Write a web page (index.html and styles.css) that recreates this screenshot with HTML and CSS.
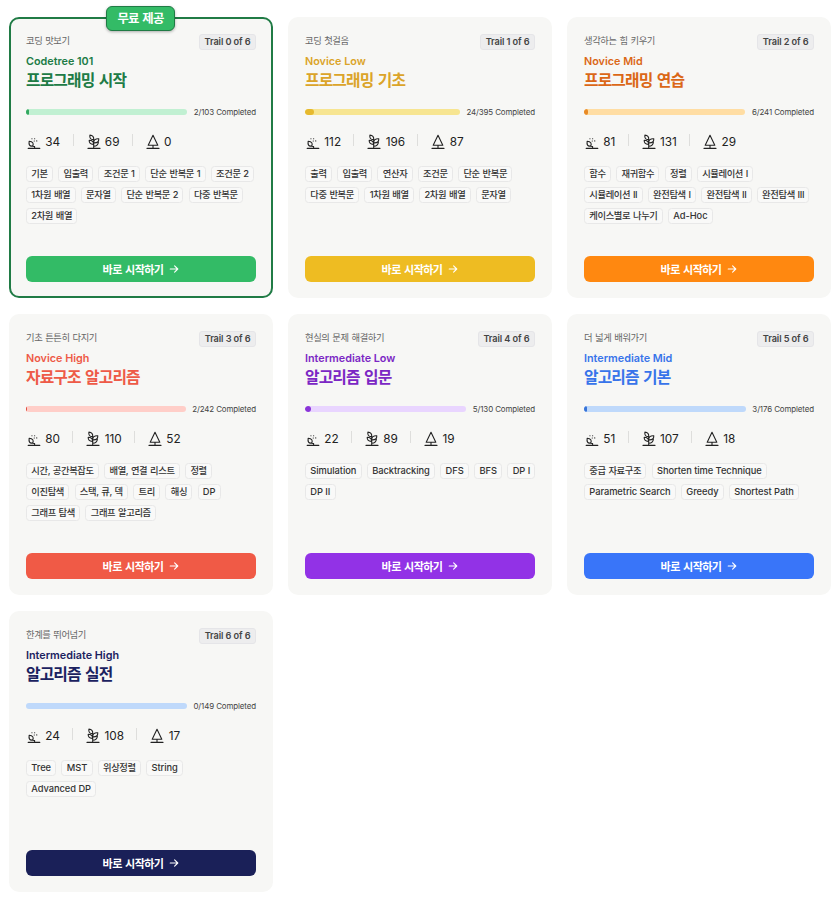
FILE: index.html
```html
<!DOCTYPE html>
<html lang="ko">
<head>
    <title>Codetree Trails</title>
    <meta charset="UTF-8">
    <link rel="stylesheet" href="styles.css">
</head>
<body>

    <svg class="sprite" width="0" height="0">
        <symbol id="seed" viewBox="0 0 16 16">
            <path d="M2.2 14.4H13.8M8.6 14.2V12.6M6.6 12C3.6 12.6 2.6 10.6 3.2 7.2C6.6 7.6 8.2 9.4 6.6 12ZM6.6 12L8.6 12.8"/>
            <path class="dots" d="M5.9 4.7H6M8.6 4.7H8.7M8.2 7H8.3M10.7 6.9H10.8"/>
        </symbol>
        <symbol id="sprout" viewBox="0 0 16 16">
            <path d="M2 14.4H14M7.7 14.2V5M7.7 5.6C4.6 5.8 3.4 4 3.9 1.1C6.6 1.2 8 2.8 7.7 5.6ZM7.7 10.4C4.6 10.6 3 9 3.2 6.3C6 6.3 7.7 7.7 7.7 10.4ZM7.7 8.8C7.7 6 9.4 4.5 12.8 4.8C13 7.8 11.2 9.1 7.7 8.8M7.7 12.2C10.6 12.2 12.2 10.8 12.4 8"/>
        </symbol>
        <symbol id="tree" viewBox="0 0 16 16">
            <path d="M2 14.4H14M8 14.2V11.5M8 1.2L12.8 11.3H3.2Z"/>
        </symbol>
        <symbol id="arrow" viewBox="0 0 10 10">
            <path d="M1.2 5H8.8M5.6 1.8L8.8 5L5.6 8.2"/>
        </symbol>
    </svg>

    <main class="trails">

        <section class="card green free">
            <div class="badge">무료 제공</div>
            <header>
                <div>
                    <p class="sub">코딩 맛보기</p>
                    <h3>Codetree 101</h3>
                    <h2>프로그래밍 시작</h2>
                </div>
                <span class="trail">Trail 0 of 6</span>
            </header>
            <div class="progress"><div class="bar"><div class="fill" style="width: 1.9%"></div></div><span>2/103 Completed</span></div>
            <div class="stats">
                <span><svg><use href="#seed"/></svg>34</span>
                <span><svg><use href="#sprout"/></svg>69</span>
                <span><svg><use href="#tree"/></svg>0</span>
            </div>
            <ul class="tags">
                <li>기본</li><li>입출력</li><li>조건문 1</li><li>단순 반복문 1</li><li>조건문 2</li>
                <li>1차원 배열</li><li>문자열</li><li>단순 반복문 2</li><li>다중 반복문</li><li>2차원 배열</li>
            </ul>
            <button>바로 시작하기<svg><use href="#arrow"/></svg></button>
        </section>

        <section class="card yellow">
            <header>
                <div>
                    <p class="sub">코딩 첫걸음</p>
                    <h3>Novice Low</h3>
                    <h2>프로그래밍 기초</h2>
                </div>
                <span class="trail">Trail 1 of 6</span>
            </header>
            <div class="progress"><div class="bar"><div class="fill" style="width: 6.1%"></div></div><span>24/395 Completed</span></div>
            <div class="stats">
                <span><svg><use href="#seed"/></svg>112</span>
                <span><svg><use href="#sprout"/></svg>196</span>
                <span><svg><use href="#tree"/></svg>87</span>
            </div>
            <ul class="tags">
                <li>출력</li><li>입출력</li><li>연산자</li><li>조건문</li><li>단순 반복문</li>
                <li>다중 반복문</li><li>1차원 배열</li><li>2차원 배열</li><li>문자열</li>
            </ul>
            <button>바로 시작하기<svg><use href="#arrow"/></svg></button>
        </section>

        <section class="card orange">
            <header>
                <div>
                    <p class="sub">생각하는 힘 키우기</p>
                    <h3>Novice Mid</h3>
                    <h2>프로그래밍 연습</h2>
                </div>
                <span class="trail">Trail 2 of 6</span>
            </header>
            <div class="progress"><div class="bar"><div class="fill" style="width: 2.5%"></div></div><span>6/241 Completed</span></div>
            <div class="stats">
                <span><svg><use href="#seed"/></svg>81</span>
                <span><svg><use href="#sprout"/></svg>131</span>
                <span><svg><use href="#tree"/></svg>29</span>
            </div>
            <ul class="tags">
                <li>함수</li><li>재귀함수</li><li>정렬</li><li>시뮬레이션 I</li>
                <li>시뮬레이션 II</li><li>완전탐색 I</li><li>완전탐색 II</li><li>완전탐색 III</li>
                <li>케이스별로 나누기</li><li class="en">Ad-Hoc</li>
            </ul>
            <button>바로 시작하기<svg><use href="#arrow"/></svg></button>
        </section>

        <section class="card red">
            <header>
                <div>
                    <p class="sub">기초 튼튼히 다지기</p>
                    <h3>Novice High</h3>
                    <h2>자료구조 알고리즘</h2>
                </div>
                <span class="trail">Trail 3 of 6</span>
            </header>
            <div class="progress"><div class="bar"><div class="fill" style="width: 0.8%"></div></div><span>2/242 Completed</span></div>
            <div class="stats">
                <span><svg><use href="#seed"/></svg>80</span>
                <span><svg><use href="#sprout"/></svg>110</span>
                <span><svg><use href="#tree"/></svg>52</span>
            </div>
            <ul class="tags">
                <li>시간, 공간복잡도</li><li>배열, 연결 리스트</li><li>정렬</li>
                <li>이진탐색</li><li>스택, 큐, 덱</li><li>트리</li><li>해싱</li><li class="en">DP</li>
                <li>그래프 탐색</li><li>그래프 알고리즘</li>
            </ul>
            <button>바로 시작하기<svg><use href="#arrow"/></svg></button>
        </section>

        <section class="card purple">
            <header>
                <div>
                    <p class="sub">현실의 문제 해결하기</p>
                    <h3>Intermediate Low</h3>
                    <h2>알고리즘 입문</h2>
                </div>
                <span class="trail">Trail 4 of 6</span>
            </header>
            <div class="progress"><div class="bar"><div class="fill" style="width: 3.8%"></div></div><span>5/130 Completed</span></div>
            <div class="stats">
                <span><svg><use href="#seed"/></svg>22</span>
                <span><svg><use href="#sprout"/></svg>89</span>
                <span><svg><use href="#tree"/></svg>19</span>
            </div>
            <ul class="tags">
                <li class="en">Simulation</li><li class="en">Backtracking</li><li class="en">DFS</li><li class="en">BFS</li><li class="en">DP I</li>
                <li class="en">DP II</li>
            </ul>
            <button>바로 시작하기<svg><use href="#arrow"/></svg></button>
        </section>

        <section class="card blue">
            <header>
                <div>
                    <p class="sub">더 넓게 배워가기</p>
                    <h3>Intermediate Mid</h3>
                    <h2>알고리즘 기본</h2>
                </div>
                <span class="trail">Trail 5 of 6</span>
            </header>
            <div class="progress"><div class="bar"><div class="fill" style="width: 1.7%"></div></div><span>3/176 Completed</span></div>
            <div class="stats">
                <span><svg><use href="#seed"/></svg>51</span>
                <span><svg><use href="#sprout"/></svg>107</span>
                <span><svg><use href="#tree"/></svg>18</span>
            </div>
            <ul class="tags">
                <li>중급 자료구조</li><li class="en">Shorten time Technique</li>
                <li class="en">Parametric Search</li><li class="en">Greedy</li><li class="en">Shortest Path</li>
            </ul>
            <button>바로 시작하기<svg><use href="#arrow"/></svg></button>
        </section>

        <section class="card navy">
            <header>
                <div>
                    <p class="sub">한계를 뛰어넘기</p>
                    <h3>Intermediate High</h3>
                    <h2>알고리즘 실전</h2>
                </div>
                <span class="trail">Trail 6 of 6</span>
            </header>
            <div class="progress"><div class="bar"></div><span>0/149 Completed</span></div>
            <div class="stats">
                <span><svg><use href="#seed"/></svg>24</span>
                <span><svg><use href="#sprout"/></svg>108</span>
                <span><svg><use href="#tree"/></svg>17</span>
            </div>
            <ul class="tags">
                <li class="en">Tree</li><li class="en">MST</li><li>위상정렬</li><li class="en">String</li><li class="en">Advanced DP</li>
            </ul>
            <button>바로 시작하기<svg><use href="#arrow"/></svg></button>
        </section>

    </main>
</body>
</html>
```
FILE: styles.css
```css
* {
    box-sizing: border-box;
}

body {
    margin: 0;
    background: #fff;
    font-family: Inter, "Noto Sans CJK KR", sans-serif;
    color: #222;
}

p, h2, h3, ul {
    margin: 0;
    padding: 0;
}

svg {
    fill: none;
    stroke: currentColor;
    stroke-linecap: round;
    stroke-linejoin: round;
}

.sprite {
    position: absolute;
}

.trails {
    display: grid;
    grid-template-columns: repeat(3, 264px);
    grid-auto-rows: 281px;
    gap: 15.8px 15px;
    padding: 17px 0 0 9px;
}

.card {
    position: relative;
    display: flex;
    flex-direction: column;
    padding: 15px 15px 14px;
    border: 2px solid transparent;
    border-radius: 10px;
    background: #f7f7f5;
}

.free {
    border-color: #207b45;
}

.badge {
    position: absolute;
    top: -13px;
    left: 95px;
    width: 69px;
    height: 25px;
    border: 1.5px solid #207b45;
    border-radius: 6px;
    background: #33bb66;
    box-shadow: 0 1px 3px rgba(0, 0, 0, .3);
    color: #fff;
    font-size: 12.4px;
    font-weight: 600;
    line-height: 23px;
    letter-spacing: -.06em;
    word-spacing: .1em;
    text-align: center;
}

.card header {
    display: flex;
    justify-content: space-between;
    align-items: flex-start;
    height: 72px;
}

.sub {
    color: #666;
    font-size: 9.3px;
    line-height: 13px;
    letter-spacing: -.045em;
    word-spacing: .08em;
}

.card h3 {
    margin-top: 6px;
    color: var(--title);
    font-size: 10.8px;
    font-weight: 600;
    line-height: 17px;
}

.card h2 {
    color: var(--title);
    font-size: 15.8px;
    font-weight: 700;
    line-height: 21px;
    letter-spacing: -.055em;
    word-spacing: .1em;
}

.trail {
    height: 16px;
    padding: 0 4.4px;
    border: 1px solid #e5e5e8;
    border-radius: 3px;
    background: #ededee;
    color: #444;
    font-size: 9.2px;
    font-weight: 600;
    line-height: 14px;
    letter-spacing: -.01em;
    white-space: nowrap;
}

.progress {
    display: flex;
    align-items: center;
    gap: 6.5px;
    height: 12px;
    color: #444;
    font-size: 7.95px;
    letter-spacing: -.015em;
    white-space: nowrap;
}

.bar {
    flex: 1;
    height: 6px;
    border-radius: 3px;
    background: var(--track);
    overflow: hidden;
}

.fill {
    height: 6px;
    border-radius: 3px;
    background: var(--fill);
}

.stats {
    display: flex;
    height: 16px;
    margin-top: 16px;
    font-size: 11.8px;
    line-height: 16px;
}

.stats span {
    display: flex;
    gap: 3.3px;
}

.stats span + span {
    margin-left: 12.3px;
    padding-left: 13px;
    background: linear-gradient(#dededc, #dededc) no-repeat 0 0 / 1px 12px;
}

.stats svg {
    width: 16px;
    height: 16px;
    stroke-width: 1.1;
}

.dots {
    stroke-width: 1.1;
}

.tags {
    display: flex;
    flex-wrap: wrap;
    gap: 5px 5.2px;
    margin-top: 16px;
    margin-right: -.5px;
    list-style: none;
}

.tags li {
    height: 16px;
    padding: 0 4.3px;
    border: 1px solid #e8e8e8;
    border-radius: 3.5px;
    background: #f9f9f8;
    color: #333;
    font-size: 9.3px;
    font-weight: 500;
    line-height: 13px;
    letter-spacing: -.04em;
    word-spacing: .07em;
    white-space: nowrap;
}

.tags .en {
    padding: 0 4.3px;
    letter-spacing: -.005em;
    word-spacing: 0;
}

button {
    display: flex;
    align-items: center;
    justify-content: center;
    gap: 6px;
    height: 26px;
    margin-top: auto;
    padding: 0;
    border: 0;
    border-radius: 6px;
    background: var(--button);
    color: #fff;
    font-family: inherit;
    font-size: 11.1px;
    font-weight: 600;
    letter-spacing: -.055em;
    word-spacing: .1em;
}

button svg {
    width: 10px;
    height: 10px;
    stroke-width: 1.1;
}

.green { --title: #207b45; --track: #c1f0d2; --fill: #33a860; --button: #33bb66; }
.yellow { --title: #dba429; --track: #f7e591; --fill: #e6b92e; --button: #eebc22; }
.orange { --title: #db6717; --track: #ffdda3; --fill: #e88a25; --button: #ff8810; }
.red { --title: #ee5a47; --track: #ffcec8; --fill: #e04a3c; --button: #f05a46; }
.purple { --title: #7b27c4; --track: #e9d5ff; --fill: #8a35d8; --button: #9232e6; }
.blue { --title: #3874ea; --track: #bfd9fb; --fill: #3874d8; --button: #3975f9; }
.navy { --title: #1b2260; --track: #bfd9fb; --fill: #1a2058; --button: #1a2058; }
```
